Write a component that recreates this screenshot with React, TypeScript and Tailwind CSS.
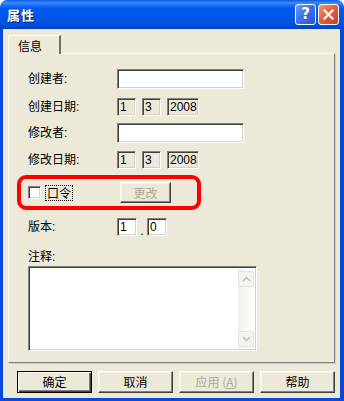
import React from "react";

const sunken =
  "border border-t-[#808080] border-l-[#808080] border-b-white border-r-white shadow-[inset_1px_1px_0_#404040,inset_-1px_-1px_0_#d4d0c8]";
const raised =
  "border border-t-white border-l-white border-b-[#404040] border-r-[#404040] shadow-[inset_-1px_-1px_0_#808080,inset_1px_1px_0_#f4f2e8]";

function Label({ children }: { children: React.ReactNode }) {
  return <div className="w-[89px] leading-[14px]">{children}</div>;
}

function Field({ w, gray, children }: { w: string; gray?: boolean; children?: React.ReactNode }) {
  return (
    <div
      className={`${sunken} ${w} h-full ${gray ? "bg-[#ECE9D8]" : "bg-white"} flex items-center pl-[2px] text-[12px] leading-none`}
    >
      {children}
    </div>
  );
}

function Chevron({ up }: { up?: boolean }) {
  return (
    <svg width="9" height="6" viewBox="0 0 9 6">
      <path
        d={up ? "M1 5 L4.5 1.5 L8 5" : "M1 1 L4.5 4.5 L8 1"}
        fill="none"
        stroke="#c4c3bb"
        strokeWidth="1.6"
      />
    </svg>
  );
}

export default function App() {
  return (
    <div className="w-[344px] h-[401px] flex flex-col bg-white font-['Liberation_Sans','Noto_Sans_CJK_SC',sans-serif] text-[12px] text-black">
      {/* Title bar */}
      <div className="h-[29px] shrink-0 rounded-t-[7px] bg-[linear-gradient(180deg,#0A5AE0_0%,#3E8DF8_10%,#1C6CF5_18%,#0058EE_30%,#0055E5_70%,#0050DA_88%,#003FC0_100%)] flex items-center pl-[7px] pr-[5px]">
        <div className="text-white font-bold text-[13px] tracking-[1px] [text-shadow:1px_1px_0_#0A1E70] font-['Noto_Sans_CJK_SC',sans-serif]">
          属性
        </div>
        <div className="ml-auto flex gap-[2px] items-center">
          <div className="w-[21px] h-[21px] rounded-[3px] border border-white bg-[linear-gradient(135deg,#6A9CF8_0%,#3C73EC_45%,#2557D6_100%)] flex items-center justify-center">
            <span className="text-white font-bold text-[15px] leading-none font-['DejaVu_Sans',sans-serif]">?</span>
          </div>
          <div className="w-[21px] h-[21px] rounded-[3px] border border-white bg-[linear-gradient(135deg,#F09A7E_0%,#E2603E_45%,#C8402A_100%)] flex items-center justify-center">
            <svg width="11" height="11" viewBox="0 0 11 11">
              <path d="M1.5 1.5 L9.5 9.5 M9.5 1.5 L1.5 9.5" stroke="white" strokeWidth="2.2" strokeLinecap="square" />
            </svg>
          </div>
        </div>
      </div>

      {/* Body */}
      <div className="flex-1 flex flex-col border-l-[3px] border-r-[4px] border-b-[3px] border-[#0848DD] bg-[#ECE9D8] pl-[5px] pr-[5px] pt-[6px]">
        {/* Tab */}
        <div className="flex">
          <div className="relative z-10 w-[53px] h-[19px] -mb-px border-t border-l border-white border-r-2 border-r-[#716F64] rounded-tl-[2px] bg-[#ECE9D8] flex items-center pl-[9px] pt-[1px] font-['Noto_Sans_CJK_SC',sans-serif]">
            信息
          </div>
        </div>

        {/* Panel */}
        <div className="h-[310px] w-[327px] border-t border-l border-white border-r border-b border-r-[#808080] border-b-[#808080] shadow-[1px_1px_0_#D4D0C8] flex flex-col pl-[19px] font-['Liberation_Sans','Noto_Sans_CJK_SC',sans-serif]">
          <div className="mt-[15px] h-[20px] flex items-center">
            <Label>创建者:</Label>
            <Field w="w-[127px]" />
          </div>
          <div className="mt-[9px] h-[18px] flex items-center">
            <Label>创建日期:</Label>
            <div className="flex gap-[6px] h-full">
              <Field w="w-[19px]" gray>1</Field>
              <Field w="w-[19px]" gray>3</Field>
              <Field w="w-[32px]" gray>2008</Field>
            </div>
          </div>
          <div className="mt-[7px] h-[20px] flex items-center">
            <Label>修改者:</Label>
            <Field w="w-[127px]" />
          </div>
          <div className="mt-[8px] h-[18px] flex items-center">
            <Label>修改日期:</Label>
            <div className="flex gap-[6px] h-full">
              <Field w="w-[19px]" gray>1</Field>
              <Field w="w-[19px]" gray>3</Field>
              <Field w="w-[32px]" gray>2008</Field>
            </div>
          </div>

          {/* Red highlighted row */}
          <div className="mt-[6px] -ml-[11px] w-[184px] h-[35px] border-[4px] border-[#FF0000] rounded-[9px] flex items-center pl-[7px]">
            <div className={`w-[13px] h-[13px] bg-white ${sunken}`} />
            <div className="ml-[4px] border border-dotted border-black px-[1px] leading-[14px] font-['Noto_Sans_CJK_SC',sans-serif]">
              口令
            </div>
            <div className={`ml-[47px] w-[51px] h-[21px] ${raised} bg-[#ECE9D8] flex items-center justify-center text-[#ACA899] font-['Noto_Sans_CJK_SC',sans-serif]`}>
              更改
            </div>
          </div>

          <div className="mt-[8px] h-[18px] flex items-center">
            <Label>版本:</Label>
            <div className="flex h-full items-end">
              <Field w="w-[20px]">1</Field>
              <div className="w-[10px] text-center leading-[10px]">.</div>
              <Field w="w-[20px]">0</Field>
            </div>
          </div>

          <div className="mt-[14px] h-[14px] leading-[14px]">注释:</div>

          <div className={`mt-[2px] w-[229px] h-[85px] bg-white ${sunken} flex justify-end p-[2px]`}>
            <div className="w-[16px] h-full flex flex-col bg-[linear-gradient(90deg,#F3F1EC,#FEFEFB)]">
              <div className="h-[16px] mt-[2px] border border-[#E4E2DA] rounded-[2px] bg-[#F4F3EE] flex items-center justify-center">
                <Chevron up />
              </div>
              <div className="flex-1" />
              <div className="h-[16px] mb-[1px] border border-[#E4E2DA] rounded-[2px] bg-[#F4F3EE] flex items-center justify-center">
                <Chevron />
              </div>
            </div>
          </div>
        </div>

        {/* Buttons */}
        <div className="mt-[8px] flex gap-[6px] pl-[9px] font-['Noto_Sans_CJK_SC',sans-serif]">
          <div className="w-[75px] h-[22px] border border-black shadow-[inset_1px_1px_0_#fff,inset_-1px_-1px_0_#404040,inset_-2px_-2px_0_#808080] flex items-center justify-center">
            确定
          </div>
          <div className={`w-[75px] h-[22px] ${raised} flex items-center justify-center`}>取消</div>
          <div className={`w-[75px] h-[22px] ${raised} flex items-center justify-center text-[#ACA899]`}>
            应用 (<span className="underline">A</span>)
          </div>
          <div className={`w-[75px] h-[22px] ${raised} flex items-center justify-center`}>帮助</div>
        </div>
      </div>
    </div>
  );
}
